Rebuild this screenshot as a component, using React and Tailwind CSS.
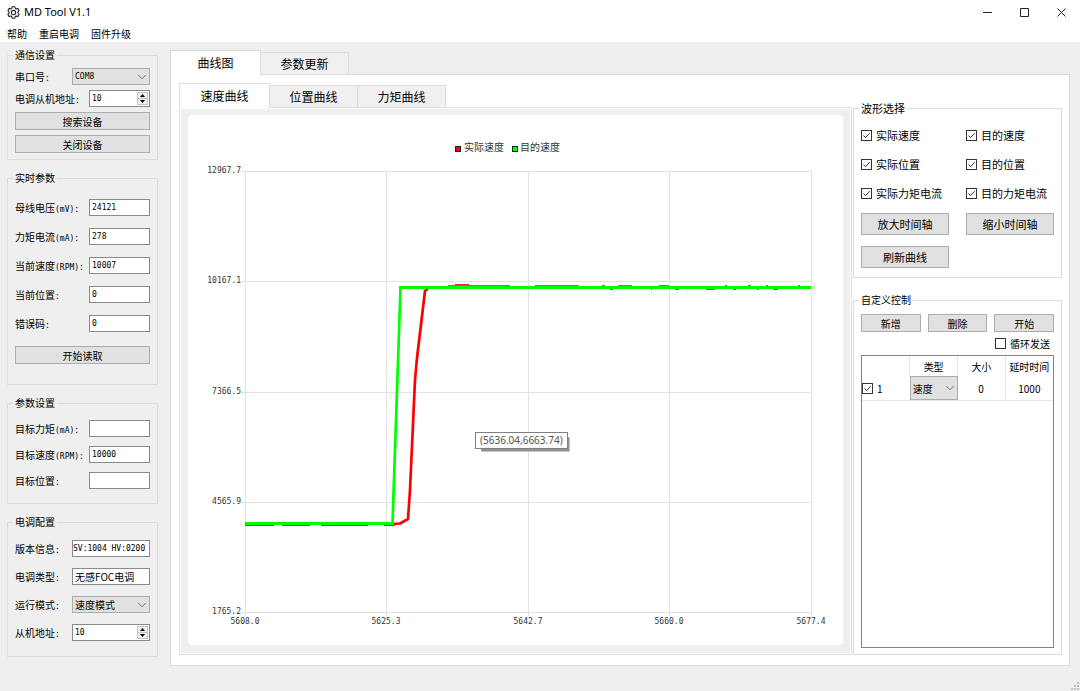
import { useState } from 'react';
import { ChevronDown } from 'lucide-react';

const LABEL_FONT = "font-['Noto_Sans_CJK_SC',sans-serif]";
const MONO_FONT = "font-['DejaVu_Sans_Mono','Noto_Sans_CJK_SC',monospace] text-[8px]";
const BUTTON = 'flex items-center justify-center border border-[#adadad] bg-[#e1e1e1] hover:border-[#0078d7] hover:bg-[#e5f1fb]';

const Group = ({ title, titleClass = 'text-[10px]', className = '', children }) => (
  <fieldset className={`min-w-0 border border-[#dcdcdc] px-[7px] ${className}`}>
    <legend className={`-ml-0.5 h-4 px-0.5 leading-4 ${titleClass}`}>{title}</legend>
    {children}
  </fieldset>
);

const Row = ({ id, label, unit, children }) => (
  <div className="flex h-[17px] items-center justify-between">
    <label htmlFor={id} className="whitespace-nowrap">
      {label}
      <span className={MONO_FONT}>{unit ? `(${unit}):` : ':'}</span>
    </label>
    {children}
  </div>
);

const TextField = ({ id, value, className = `w-[61px] px-0.5 ${MONO_FONT}` }) => (
  <input id={id} defaultValue={value} className={`h-[17px] border border-[#8a8a8a] bg-white ${className}`} />
);

const Spin = ({ id, value, className }) => {
  const [count, setCount] = useState(value);

  return (
    <div className={`flex h-[17px] border border-[#8a8a8a] bg-white ${className}`}>
      <input
        id={id}
        value={count}
        onChange={(e) => setCount(Number(e.target.value) || 0)}
        className={`w-full min-w-0 flex-1 px-0.5 ${MONO_FONT}`}
      />
      <div className="m-px flex w-[11px] flex-col border border-[#c4c4c4] bg-[#f0f0f0]">
        <button aria-label="增加" onClick={() => setCount(count + 1)} className="flex flex-1 items-center justify-center border-b border-[#c4c4c4]">
          <svg viewBox="0 0 5 3" className="h-[3px] w-[5px]"><path d="M0 3L2.5 0L5 3Z" /></svg>
        </button>
        <button aria-label="减少" onClick={() => setCount(count - 1)} className="flex flex-1 items-center justify-center">
          <svg viewBox="0 0 5 3" className="h-[3px] w-[5px]"><path d="M0 0L2.5 3L5 0Z" /></svg>
        </button>
      </div>
    </div>
  );
};

const Combo = ({ id, label, options, className }) => (
  <div className={`relative ${className}`}>
    <select id={id} aria-label={label} className="h-full w-full appearance-none border border-[#adadad] bg-[#e1e1e1] px-0.5">
      {options.map(o => <option key={o}>{o}</option>)}
    </select>
    <ChevronDown className="pointer-events-none absolute inset-y-0 right-px my-auto h-[14px] w-[14px] text-[#666]" strokeWidth={1.7} />
  </div>
);

const Check = ({ label, checked = false, className = '' }) => (
  <label className={`flex h-4 items-center gap-1 whitespace-nowrap ${className}`}>
    <span className="relative h-[11px] w-[11px] shrink-0">
      <input type="checkbox" defaultChecked={checked} className="peer block h-[11px] w-[11px] appearance-none border border-[#333] bg-white" />
      <svg viewBox="0 0 11 11" className="pointer-events-none absolute inset-0 hidden h-[11px] w-[11px] peer-checked:block">
        <path d="M2.5 5.5L4.5 7.7L8.7 3.2" fill="none" stroke="#333" />
      </svg>
    </span>
    {label}
  </label>
);

const Tabs = ({ items, active, onSelect }) => (
  <div role="tablist" className="flex h-6 items-end text-[12px]">
    {items.map((item, i) => (
      <button
        key={item}
        role="tab"
        aria-selected={i === active}
        onClick={() => onSelect(i)}
        className={`border border-b-0 border-[#dcdcdc] ${
          i === active
            ? 'relative -mb-px h-[25px] min-w-[91px] bg-white'
            : 'h-[22px] min-w-[88px] border-l-0 bg-[#f0f0f0]'
        }`}
      >
        {item}
      </button>
    ))}
  </div>
);

const X_TICKS = [[57, '5608.0'], [198, '5625.3'], [340, '5642.7'], [481, '5660.0'], [623, '5677.4']];
const Y_TICKS = [[56, '12967.7'], [166, '10167.1'], [277, '7366.5'], [387, '4565.9'], [497, '1765.2']];

// small ripple of the measured speed around the target
const PEAKS = [[260, 322], [347, 391], [414, 417], [430, 444], [471, 481], [537, 539], [560, 563], [578, 580], [610, 612]];
const DIPS = [[422, 425], [463, 464], [487, 491], [518, 527], [545, 548], [569, 571], [585, 590]];
const IDLE = [[57, 86], [94, 122], [133, 180], [196, 207]];

const SpeedChart = () => (
  <svg viewBox="0 0 655 530" role="img" aria-label="速度曲线" className="block h-auto w-full">
    <g stroke="#e2e2e2" shapeRendering="crispEdges">
      {X_TICKS.map(([x]) => <path key={x} d={`M${x + 0.5} 56V501`} />)}
      {Y_TICKS.map(([y]) => <path key={y} d={`M53 ${y + 0.5}H623`} />)}
    </g>
    <g className="font-['DejaVu_Sans_Mono',monospace] text-[8px]" fill="#333">
      {X_TICKS.map(([x, t]) => <text key={t} x={x} y="509" textAnchor="middle">{t}</text>)}
      {Y_TICKS.map(([y, t]) => <text key={t} x="53" y={y + 2} textAnchor="end">{t}</text>)}
    </g>

    <g className="font-['Noto_Sans_CJK_SC',sans-serif] text-[10px]" fill="#333">
      <rect x="267.5" y="31.5" width="5" height="5" fill="#f00" stroke="#222" />
      <text x="276" y="36">实际速度</text>
      <rect x="324.5" y="31.5" width="5" height="5" fill="#0f0" stroke="#222" />
      <text x="332" y="36">目的速度</text>
    </g>

    <path
      d="M203 409L212 408.5L220 404L222 375L227 265L229 243L237 176L240 173"
      fill="none"
      stroke="#f00"
      strokeWidth="2.7"
      strokeLinejoin="round"
    />
    <path d="M204.5 409L212.5 173" fill="none" stroke="#0f0" strokeWidth="2.7" />
    <g shapeRendering="crispEdges">
      {PEAKS.map(([a, b]) => <rect key={a} x={a} y="170" width={b - a} height="1" fill="#c4622d" />)}
      {DIPS.map(([a, b]) => <rect key={a} x={a} y="174" width={b - a} height="1" fill="#e2401c" />)}
      {IDLE.map(([a, b]) => <rect key={a} x={a} y="410" width={b - a} height="1" fill="#e22a10" />)}
      <rect x="267" y="169" width="14" height="1" fill="#e22" />
      <rect x="211" y="171" width="412" height="3" fill="#0f0" />
      <rect x="57" y="407" width="149" height="3" fill="#0f0" />
    </g>

    <rect x="293" y="322" width="88" height="14" fill="#888" />
    <rect x="294" y="323" width="88" height="14" fill="#999" opacity="0.6" />
    <rect x="287.5" y="317.5" width="92" height="16" fill="#fff" stroke="#808080" />
    <text x="292" y="329" fill="#555" className="font-['Noto_Sans',sans-serif] text-[10px]">(5636.04,6663.74)</text>
  </svg>
);

const GearIcon = () => (
  <svg viewBox="0 0 24 24" className="h-[13px] w-[13px]" fill="none" stroke="#222" strokeWidth="2" strokeLinejoin="round">
    <path d="M9.5 1.5h5l.7 3 1.8.9 2.9-1 2.5 4.2-2.2 2.1v2.6l2.2 2.1-2.5 4.2-2.9-1-1.8.9-.7 3h-5l-.7-3-1.8-.9-2.9 1-2.5-4.2 2.2-2.1v-2.6l-2.2-2.1 2.5-4.2 2.9 1 1.8-.9z" />
    <circle cx="12" cy="12" r="4" />
  </svg>
);

const WINDOW_BUTTONS = [
  ['最小化', 'M0 4.5H9'],
  ['最大化', 'M0.5 0.5H8.5V8.5H0.5Z'],
  ['关闭', 'M0.5 0.5L8.5 8.5M8.5 0.5L0.5 8.5'],
];

const Header = () => (
  <header className="bg-white">
    <div className="flex h-6 items-center pl-[7px]">
      <GearIcon />
      <h1 className="ml-1 flex-1 font-['Noto_Sans',sans-serif] text-[11px]">MD Tool V1.1</h1>
      <div className="flex gap-7 pr-[14px]">
        {WINDOW_BUTTONS.map(([name, d]) => (
          <button key={name} aria-label={name}>
            <svg viewBox="0 0 9 9" className="block h-[9px] w-[9px]" fill="none" stroke="#222"><path d={d} /></svg>
          </button>
        ))}
      </div>
    </div>
    <nav className="flex h-[18px] items-center gap-3 px-[7px]">
      <button>帮助</button>
      <button>重启电调</button>
      <button>固件升级</button>
    </nav>
  </header>
);

const Sidebar = () => (
  <aside className="flex w-[151px] shrink-0 flex-col gap-[10px] pt-[5px]">
    <Group title="通信设置" className="flex flex-col gap-[5px] pb-[6px] pt-[5px]">
      <Row id="port" label="串口号">
        <Combo id="port" options={['COM8']} className={`h-[17px] w-[78px] ${MONO_FONT}`} />
      </Row>
      <Row id="slave" label="电调从机地址">
        <Spin id="slave" value={10} className="w-[61px]" />
      </Row>
      <button className={`h-[18px] ${BUTTON}`}>搜索设备</button>
      <button className={`h-[18px] ${BUTTON}`}>关闭设备</button>
    </Group>

    <Group title="实时参数" className="flex flex-col gap-3 pb-[20px] pt-[13px]">
      <Row id="voltage" label="母线电压" unit="mV"><TextField id="voltage" value="24121" /></Row>
      <Row id="current" label="力矩电流" unit="mA"><TextField id="current" value="278" /></Row>
      <Row id="speed" label="当前速度" unit="RPM"><TextField id="speed" value="10007" /></Row>
      <Row id="position" label="当前位置"><TextField id="position" value="0" /></Row>
      <Row id="error" label="错误码"><TextField id="error" value="0" /></Row>
      <button className={`mt-0.5 h-[18px] ${BUTTON}`}>开始读取</button>
    </Group>

    <Group title="参数设置" className="flex flex-col gap-[9px] pb-[14px] pt-[9px]">
      <Row id="target-torque" label="目标力矩" unit="mA"><TextField id="target-torque" value="" /></Row>
      <Row id="target-speed" label="目标速度" unit="RPM"><TextField id="target-speed" value="10000" /></Row>
      <Row id="target-position" label="目标位置"><TextField id="target-position" value="" /></Row>
    </Group>

    <Group title="电调配置" className="flex flex-col gap-[11px] pb-[15px] pt-[10px]">
      <Row id="version" label="版本信息">
        <TextField id="version" value="SV:1004 HV:0200" className={`w-[78px] ${MONO_FONT}`} />
      </Row>
      <Row id="esc-type" label="电调类型">
        <TextField id="esc-type" value="无感FOC电调" className="w-[78px] px-0.5" />
      </Row>
      <Row id="mode" label="运行模式">
        <Combo id="mode" options={['速度模式', '位置模式', '力矩模式']} className="h-[17px] w-[78px]" />
      </Row>
      <Row id="slave-address" label="从机地址">
        <Spin id="slave-address" value={10} className="w-[78px]" />
      </Row>
    </Group>
  </aside>
);

const WaveGroup = () => (
  <Group title="波形选择" titleClass="text-[11px]" className="pb-[9px] pt-[11px] text-[11px]">
    <div className="grid grid-cols-2 gap-x-[17px] gap-y-[13px]">
      {['实际速度', '目的速度', '实际位置', '目的位置', '实际力矩电流', '目的力矩电流'].map(name => (
        <Check key={name} label={name} checked />
      ))}
    </div>
    <div className="mt-3 grid grid-cols-2 gap-x-[17px] gap-y-[11px]">
      <button className={`h-[22px] ${BUTTON}`}>放大时间轴</button>
      <button className={`h-[22px] ${BUTTON}`}>缩小时间轴</button>
      <button className={`h-[22px] ${BUTTON}`}>刷新曲线</button>
    </div>
  </Group>
);

const CustomGroup = () => (
  <Group title="自定义控制" className="flex flex-1 flex-col pb-[6px] pt-[6px]">
    <div className="grid grid-cols-3 gap-[7px]">
      <button className={`h-[18px] ${BUTTON}`}>新增</button>
      <button className={`h-[18px] ${BUTTON}`}>删除</button>
      <button className={`h-[18px] ${BUTTON}`}>开始</button>
    </div>
    <Check label="循环发送" className="mt-[3px] self-end pr-1" />
    <div className="mt-1 flex-1 border border-[#82828c]">
      <table className="w-full table-fixed border-collapse text-center">
        <thead>
          <tr className="h-5">
            <th className="border-r border-[#e5e5e5]" />
            <th className="border-r border-[#e5e5e5] p-0 font-normal">类型</th>
            <th className="border-r border-[#e5e5e5] p-0 font-normal">大小</th>
            <th className="whitespace-nowrap p-0 font-normal">延时时间</th>
          </tr>
        </thead>
        <tbody>
          <tr className="h-6 border-b border-[#e5e5e5]">
            <td className="p-0"><Check label="1" checked /></td>
            <td className="p-0">
              <Combo label="类型" options={['速度', '位置', '力矩']} className="h-6" />
            </td>
            <td className="border-r border-[#e5e5e5] p-0">0</td>
            <td className="p-0">1000</td>
          </tr>
        </tbody>
      </table>
    </div>
  </Group>
);

const App = () => {
  const [page, setPage] = useState(0);
  const [curve, setCurve] = useState(0);

  return (
    <div className={`flex min-h-screen flex-col bg-[#efefef] text-[10px] text-black ${LABEL_FONT}`}>
      <Header />

      <main className="flex flex-1 gap-3 pl-[7px] pr-[10px]">
        <Sidebar />

        <section className="flex min-w-0 flex-1 flex-col pt-2">
          <Tabs items={['曲线图', '参数更新']} active={page} onSelect={setPage} />
          <div className="flex flex-1 gap-px border border-[#dcdcdc] bg-white pb-[10px] pl-2 pr-[7px] pt-2">
            <div className="flex min-w-0 flex-1 flex-col">
              <Tabs items={['速度曲线', '位置曲线', '力矩曲线']} active={curve} onSelect={setCurve} />
              <div className="flex-1 border border-[#e0e0e0] p-px">
                <div className="h-full bg-[#efefef] px-[7px] pb-[7px] pt-[6px]">
                  <div className="rounded bg-white">
                    <SpeedChart />
                  </div>
                </div>
              </div>
            </div>

            <div className="flex w-[209px] shrink-0 flex-col gap-[14px] pt-[17px]">
              <WaveGroup />
              <CustomGroup />
            </div>
          </div>
        </section>
      </main>

      <footer className="flex h-[25px] items-end justify-end">
        <svg viewBox="0 0 9 9" className="h-[9px] w-[9px]" fill="#bdbdbd">
          <path d="M6 0h2v2h-2zM3 3h2v2h-2zM6 3h2v2h-2zM0 6h2v2h-2zM3 6h2v2h-2zM6 6h2v2h-2z" />
        </svg>
      </footer>
    </div>
  );
};

export default App;
